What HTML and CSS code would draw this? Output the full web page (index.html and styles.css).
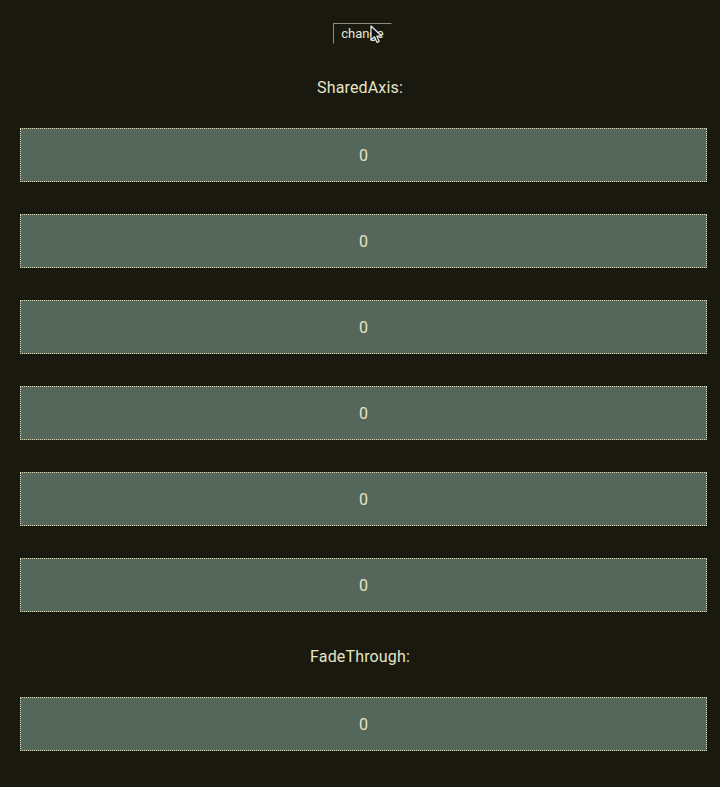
FILE: index.html
```html
<!DOCTYPE html>
<html>
<head>
<meta charset="utf-8">
<link rel="stylesheet" href="styles.css">
</head>
<body>
<div class="top">
  <span class="btn-wrap">
    <button class="btn">change</button>
    <svg class="cursor" width="13" height="19" viewBox="0 0 13 19"><path d="M1 1 L1 15 L4.5 11.8 L7 17.5 L9.2 16.5 L6.8 11 L11.5 11 Z" fill="#111" stroke="#eee" stroke-width="1.2" stroke-linejoin="round"/></svg>
  </span>
</div>
<div class="label first">SharedAxis:</div>
<div class="list">
  <div class="box">0</div>
  <div class="box">0</div>
  <div class="box">0</div>
  <div class="box">0</div>
  <div class="box">0</div>
  <div class="box">0</div>
</div>
<div class="label second">FadeThrough:</div>
<div class="list">
  <div class="box">0</div>
</div>
</body>
</html>
```
FILE: styles.css
```css
html, body {
  margin: 0;
  padding: 0;
  background: #19190f;
  color: #e4e4c4;
  font-family: Roboto, "Noto Sans", sans-serif;
  height: 787px;
  overflow: hidden;
}
.top {
  padding-top: 23px;
  display: flex;
  justify-content: center;
}
.btn-wrap {
  position: relative;
  display: inline-block;
  margin-left: 5px;
}
.btn {
  display: block;
  height: 21px;
  padding: 0 7px 0 7px;
  margin: 0;
  font-family: Roboto, "Noto Sans", sans-serif;
  font-size: 13px;
  color: #e8e8d0;
  background: transparent;
  border: 1px solid transparent;
  border-top-color: #8d8d7c;
  border-left-color: #8d8d7c;
  border-radius: 0;
}
.cursor {
  position: absolute;
  left: 37px;
  top: 2px;
}
.label {
  text-align: center;
  font-size: 16px;
  line-height: 20px;
  letter-spacing: 0.15px;
}
.label.first {
  margin-top: 34px;
  margin-bottom: 30px;
}
.label.second {
  margin-top: 35px;
  margin-bottom: 30px;
}
.list {
  display: flex;
  flex-direction: column;
  gap: 32px;
  padding-left: 20px;
}
.box {
  box-sizing: border-box;
  width: 687px;
  height: 54px;
  background: #55675a;
  border: 1px dotted #dcdcb8;
  display: flex;
  align-items: center;
  justify-content: center;
  font-size: 16px;
  color: #e4e4c8;
}
```
